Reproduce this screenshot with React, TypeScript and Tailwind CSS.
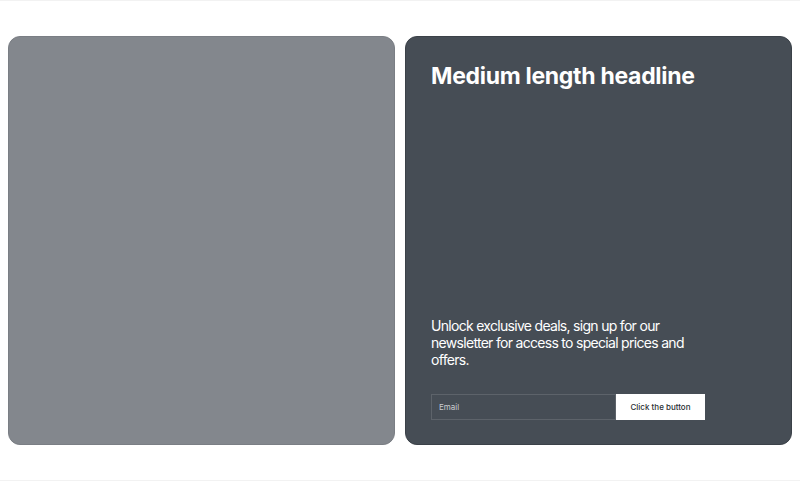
export default function App() {
  return (
    <div
      className="h-[481px] w-full border-t border-b border-[#f2f2f2] bg-white px-2 pt-[35px] pb-[35px] grid grid-cols-2 gap-[10px]"
      style={{ fontFamily: "Inter, 'Noto Sans', sans-serif" }}
    >
      <div className="min-w-0 rounded-[12px] bg-[#83878d] border border-[#7a7e84]" />
      <div className="min-w-0 rounded-[12px] bg-[#464d55] border border-[#3b4148] px-[25px] pt-[25px] pb-[24px] flex flex-col justify-between">
        <h1 className="text-[23px] leading-[28px] font-bold text-white tracking-[-0.3px]">
          Medium length headline
        </h1>
        <div className="flex flex-col gap-[26px]">
          <p className="text-[14px] leading-[17px] text-white tracking-[-0.7px] w-[275px]">
            Unlock exclusive deals, sign up for our newsletter for access to special prices and offers.
          </p>
          <div className="flex">
            <div className="w-[185px] h-[26px] border border-[#5d636a] flex items-center pl-[7px] text-[8px] text-[#c9ccd0]">
              Email
            </div>
            <button className="w-[89px] h-[26px] bg-white text-[8px] font-medium text-[#2a2e33] flex items-center justify-center">
              Click the button
            </button>
          </div>
        </div>
      </div>
    </div>
  );
}
